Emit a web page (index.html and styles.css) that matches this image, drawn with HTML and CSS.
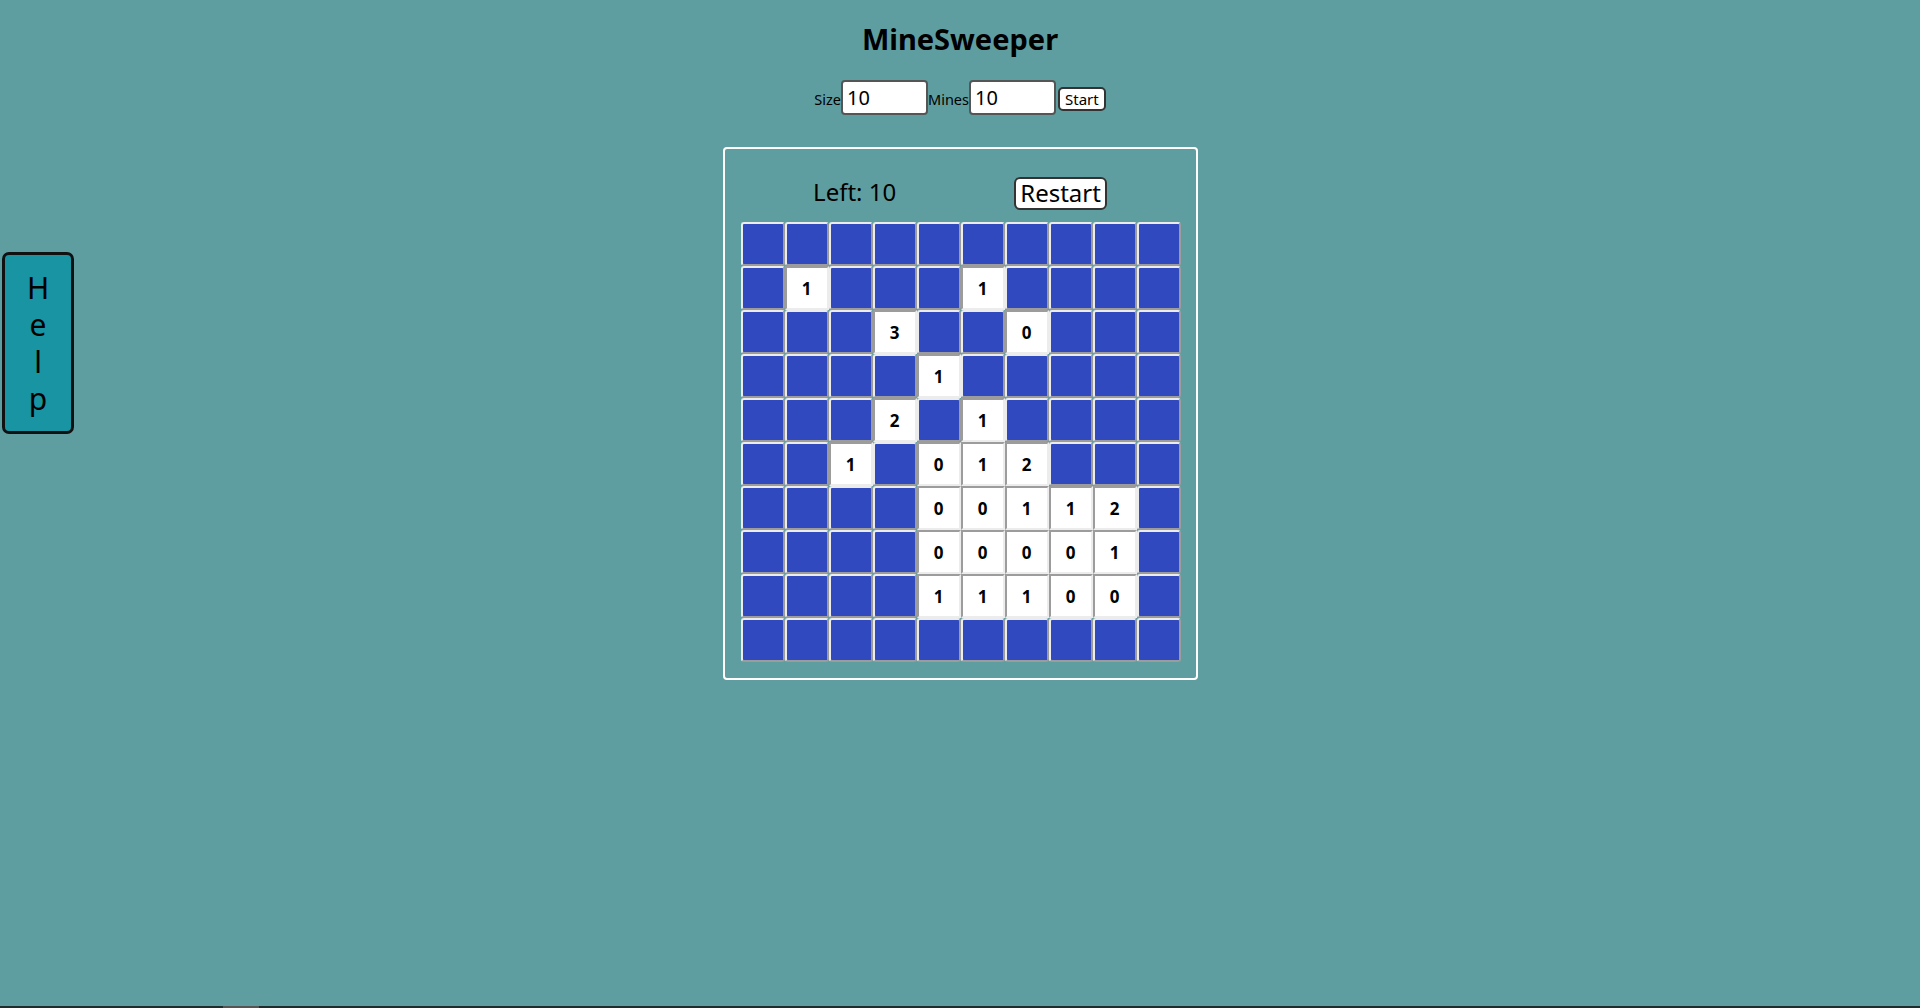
FILE: index.html
```html
<!DOCTYPE html>
<html lang="en">
<head>
<meta charset="utf-8">
<title>MineSweeper</title>
<link rel="stylesheet" href="styles.css">
</head>
<body>
<button class="help" type="button"><span>H</span><span>e</span><span>l</span><span>p</span></button>
<main class="app">
  <h1 class="title">MineSweeper</h1>
  <form class="controls"><label class="lbl" for="size">Size</label><input class="num" id="size" type="text" value="10"><label class="lbl" for="mines">Mines</label><input class="num" id="mines" type="text" value="10"><button class="start" type="button">Start</button></form>
  <section class="board">
    <div class="board-head">
      <span class="left">Left: 10</span>
      <button class="restart" type="button">Restart</button>
    </div>
    <div class="grid">
      <div class="c"></div><div class="c"></div><div class="c"></div><div class="c"></div><div class="c"></div><div class="c"></div><div class="c"></div><div class="c"></div><div class="c"></div><div class="c"></div>
      <div class="c"></div><div class="c o">1</div><div class="c"></div><div class="c"></div><div class="c"></div><div class="c o">1</div><div class="c"></div><div class="c"></div><div class="c"></div><div class="c"></div>
      <div class="c"></div><div class="c"></div><div class="c"></div><div class="c o">3</div><div class="c"></div><div class="c"></div><div class="c o">0</div><div class="c"></div><div class="c"></div><div class="c"></div>
      <div class="c"></div><div class="c"></div><div class="c"></div><div class="c"></div><div class="c o">1</div><div class="c"></div><div class="c"></div><div class="c"></div><div class="c"></div><div class="c"></div>
      <div class="c"></div><div class="c"></div><div class="c"></div><div class="c o">2</div><div class="c"></div><div class="c o">1</div><div class="c"></div><div class="c"></div><div class="c"></div><div class="c"></div>
      <div class="c"></div><div class="c"></div><div class="c o">1</div><div class="c"></div><div class="c o">0</div><div class="c o">1</div><div class="c o">2</div><div class="c"></div><div class="c"></div><div class="c"></div>
      <div class="c"></div><div class="c"></div><div class="c"></div><div class="c"></div><div class="c o">0</div><div class="c o">0</div><div class="c o">1</div><div class="c o">1</div><div class="c o">2</div><div class="c"></div>
      <div class="c"></div><div class="c"></div><div class="c"></div><div class="c"></div><div class="c o">0</div><div class="c o">0</div><div class="c o">0</div><div class="c o">0</div><div class="c o">1</div><div class="c"></div>
      <div class="c"></div><div class="c"></div><div class="c"></div><div class="c"></div><div class="c o">1</div><div class="c o">1</div><div class="c o">1</div><div class="c o">0</div><div class="c o">0</div><div class="c"></div>
      <div class="c"></div><div class="c"></div><div class="c"></div><div class="c"></div><div class="c"></div><div class="c"></div><div class="c"></div><div class="c"></div><div class="c"></div><div class="c"></div>
    </div>
  </section>
</main>
<div class="strip"><span class="thumb"></span></div>
</body>
</html>
```

FILE: styles.css
```css
html, body {
  margin: 0;
  padding: 0;
}
body {
  background: #5f9ea0;
  font-family: "Noto Sans", "DejaVu Sans", sans-serif;
  color: #000;
  min-height: 1008px;
}
.app {
  display: flex;
  flex-direction: column;
  align-items: center;
}
.title {
  margin: 14px 0 0;
  font-size: 29px;
  font-weight: 700;
  line-height: 50px;
  letter-spacing: 0;
}
.controls {
  margin-top: 16px;
  display: flex;
  align-items: baseline;
}
.lbl {
  font-size: 14.5px;
}
.num {
  box-sizing: border-box;
  width: 87px;
  height: 35px;
  margin: 0;
  padding: 0 4px;
  border: 2px solid #555;
  border-radius: 4px;
  background: #fff;
  font-family: inherit;
  font-size: 20px;
  color: #000;
}
.start {
  box-sizing: border-box;
  height: 24px;
  margin-left: 2px;
  padding: 0 5px;
  border: 2px solid #333;
  border-radius: 5px;
  background: #fff;
  font-family: inherit;
  font-size: 15px;
  line-height: 18px;
  color: #000;
}
.board {
  box-sizing: border-box;
  width: 475px;
  margin-top: 32px;
  padding: 27px 16px 16px;
  border: 2px solid #fff;
  border-radius: 4px;
}
.board-head {
  display: flex;
  justify-content: center;
  align-items: center;
  gap: 118px;
  height: 34px;
  margin-bottom: 12px;
}
.left {
  font-size: 24px;
  margin-top: -3px;
}
.restart {
  box-sizing: border-box;
  height: 33px;
  padding: 0 4px;
  border: 2px solid #333;
  border-radius: 6px;
  background: #fff;
  font-family: inherit;
  font-size: 24px;
  line-height: 28px;
  color: #000;
}
.grid {
  display: grid;
  grid-template-columns: repeat(10, 44px);
  grid-auto-rows: 44px;
}
.c {
  box-sizing: border-box;
  border: 2px solid;
  border-color: #ececec #9c9c9c #9c9c9c #ececec;
  border-radius: 3px;
  background: #3049be;
  display: flex;
  align-items: center;
  justify-content: center;
  font-family: "Noto Sans", sans-serif;
  font-weight: 700;
  font-size: 17px;
}
.c.o {
  background: #fff;
  border-color: #9c9c9c #ececec #ececec #9c9c9c;
  border-radius: 0;
}
.help {
  position: fixed;
  left: 2px;
  top: 252px;
  box-sizing: border-box;
  width: 72px;
  height: 182px;
  padding: 14px 0;
  border: 3px solid #111;
  border-radius: 7px;
  background: #1894a3;
  display: flex;
  flex-direction: column;
  align-items: center;
  font-family: "Noto Sans", sans-serif;
  font-size: 30px;
  line-height: 37px;
  color: #000;
}
.strip {
  position: fixed;
  left: 0;
  right: 0;
  bottom: 0;
  height: 2px;
  background: #1e2c2e;
}
.thumb {
  position: absolute;
  left: 223px;
  width: 36px;
  top: 0;
  height: 2px;
  background: #555;
}
```
